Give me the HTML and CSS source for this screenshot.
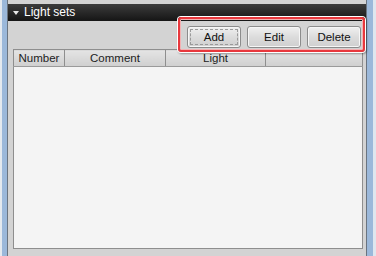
FILE: index.html
```html
<!DOCTYPE html>
<html lang="en">
<head>
    <meta charset="UTF-8">
    <meta name="viewport" content="width=device-width, initial-scale=1.0">
    <title>Light sets</title>
    <link rel="stylesheet" href="styles.css">
</head>
<body>
    <div class="window">
        <div class="edge edge-left"></div>
        <div class="panel">
            <div class="panel-header">
                <span class="arrow"></span>
                <span class="title">Light sets</span>
            </div>
            <div class="toolbar">
                <button class="btn focused">Add</button>
                <button class="btn">Edit</button>
                <button class="btn">Delete</button>
            </div>
            <table class="grid">
                <tr>
                    <th class="col-number">Number</th>
                    <th class="col-comment">Comment</th>
                    <th class="col-light">Light</th>
                    <th class="col-rest"></th>
                </tr>
                <tr class="body-row">
                    <td colspan="4"></td>
                </tr>
            </table>
            <div class="highlight"></div>
        </div>
        <div class="edge edge-right"></div>
    </div>
</body>
</html>
```

FILE: styles.css
```css
* {
    margin: 0;
    padding: 0;
    box-sizing: border-box;
}

body {
    font-family: "Liberation Sans", Arial, sans-serif;
    font-size: 11px;
    background: #d3d3d3;
    width: 376px;
    height: 256px;
    overflow: hidden;
}

.window {
    display: flex;
    height: 256px;
}

.edge {
    height: 100%;
}

.edge-left {
    width: 8px;
    border-left: 2px solid #e4e9ef;
    border-right: 1px solid #6a7480;
    background: #9bb8da;
}

.edge-right {
    width: 10px;
    border-left: 1px solid #6a7480;
    background: linear-gradient(to right, #9bb8da 0, #9bb8da 6px, #dfe6ee 6px);
}

.panel {
    position: relative;
    flex: 1;
    background: #d3d3d3;
    padding-top: 4px;
    display: flex;
    flex-direction: column;
}

.panel-header {
    height: 17px;
    background: linear-gradient(#3c3c3c, #151515);
    display: flex;
    align-items: center;
    padding-left: 5px;
    color: #fff;
}

.arrow {
    width: 0;
    height: 0;
    border-left: 3px solid transparent;
    border-right: 3px solid transparent;
    border-top: 4px solid #e8e8e8;
    margin-right: 5px;
}

.title {
    font-size: 12px;
    line-height: 17px;
}

.toolbar {
    height: 28px;
    display: flex;
    justify-content: flex-end;
    gap: 6px;
    padding: 5px 5px 0 0;
}

.btn {
    width: 54px;
    height: 22px;
    font-family: "Liberation Sans", Arial, sans-serif;
    font-size: 11.5px;
    color: #111;
    background: linear-gradient(#f0f0f0, #dcdcdc 50%, #cfcfcf);
    border: 1px solid #8c8c8c;
    border-radius: 3px;
    box-shadow: inset 0 0 0 1px #f6f6f6;
}

.btn.focused {
    outline: 1px dashed #9a9a9a;
    outline-offset: -4px;
}

.grid {
    margin: 0 3px 0 5px;
    width: calc(100% - 8px);
    height: 200px;
    border-collapse: collapse;
    border: 1px solid #8e8e8e;
    background: #f4f4f4;
}

.grid th {
    height: 17px;
    font-weight: normal;
    font-size: 11.5px;
    color: #222;
    text-align: center;
    background: linear-gradient(#e4e4e4, #cfcfcf);
    border-right: 1px solid #8e8e8e;
    border-bottom: 1px solid #9a9a9a;
    line-height: 15px;
}

.grid th.col-rest {
    border-right: none;
}

.col-number { width: 51px; }
.col-comment { width: 101px; }
.col-light { width: 100px; }

.body-row td {
    background: #f4f4f4;
}

.highlight {
    position: absolute;
    left: 170px;
    top: 17px;
    width: 187px;
    height: 35px;
    border: 2px solid #e8383d;
    border-radius: 3px;
    box-shadow: 0 0 0 1px #fff, inset 0 0 0 1px #f4b0b2, 1px 1px 2px 1px rgba(0, 0, 0, 0.35);
    pointer-events: none;
}
```
